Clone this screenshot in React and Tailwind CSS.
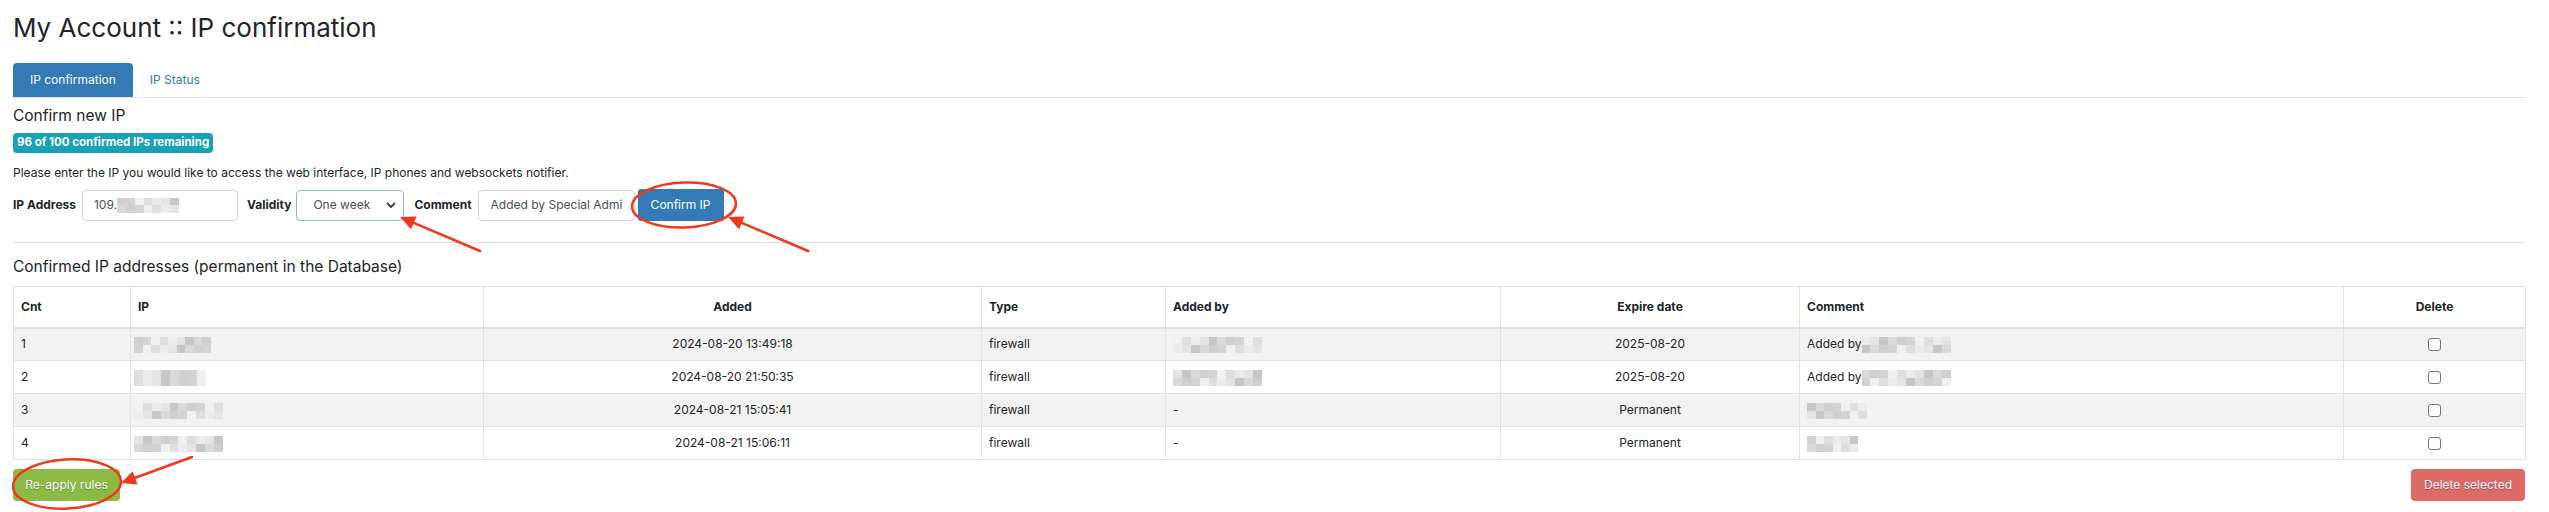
import React from "react";

const shades = ["#d9d9d9", "#cfcfcf", "#e4e4e4", "#c6c6c6", "#dedede", "#ebebeb", "#d3d3d3", "#f0f0f0"];

function Blur({ w, h = 15, seed = 1 }) {
  const cols = Math.max(1, Math.round(w / 9));
  const cells = [];
  let s = seed * 7919 + 131;
  for (let r = 0; r < 2; r++)
    for (let c = 0; c < cols; c++) {
      s = (s * 9301 + 49297) % 233280;
      cells.push(shades[s % shades.length]);
    }
  return (
    <span
      className="inline-grid align-middle"
      style={{ width: w, height: h, gridTemplateColumns: `repeat(${cols}, 1fr)`, gridTemplateRows: "1fr 1fr" }}
    >
      {cells.map((c, i) => (
        <span key={i} style={{ background: c }} />
      ))}
    </span>
  );
}

function Arrow({ x1, y1, x2, y2 }) {
  const dx = x2 - x1;
  const dy = y2 - y1;
  const L = Math.hypot(dx, dy);
  const ux = dx / L;
  const uy = dy / L;
  const hl = 15;
  const hw = 7;
  const bx = x2 - ux * hl;
  const by = y2 - uy * hl;
  const p = `${x2},${y2} ${bx - uy * hw},${by + ux * hw} ${bx + uy * hw},${by - ux * hw}`;
  return (
    <g>
      <line x1={x1} y1={y1} x2={bx + ux * 2} y2={by + uy * 2} stroke="#f2381b" strokeWidth="2.6" strokeLinecap="round" />
      <polygon points={p} fill="#f2381b" />
    </g>
  );
}

function Checkbox() {
  return <span className="inline-block w-[13px] h-[13px] border border-[#767676] rounded-[3px] bg-white align-middle" />;
}

const rows = [
  { cnt: "1", ip: 77, added: "2024-08-20 13:49:18", by: 89, exp: "2025-08-20", comment: { text: "Added by", blur: 89 } },
  { cnt: "2", ip: 72, added: "2024-08-20 21:50:35", by: 89, exp: "2025-08-20", comment: { text: "Added by", blur: 89 } },
  { cnt: "3", ip: 89, added: "2024-08-21 15:05:41", by: null, exp: "Permanent", comment: { text: "", blur: 60 } },
  { cnt: "4", ip: 89, added: "2024-08-21 15:06:11", by: null, exp: "Permanent", comment: { text: "", blur: 51 } },
];

export default function App() {
  return (
    <div className="relative min-h-[512px] bg-white pl-[13px] pr-[24px] pt-[12px] font-['Inter',sans-serif] text-[#333]">
      <h1 className="text-[26px] leading-[32px] font-normal text-[#212529]">My Account :: IP confirmation</h1>

      <div className="mt-[19px] flex border-b border-[#dee2e6]">
        <div className="h-[34px] px-[17px] flex items-center bg-[#337ab7] text-white text-[12px] rounded-t-[4px]">
          IP confirmation
        </div>
        <div className="h-[34px] px-[17px] flex items-center text-[#337ab7] text-[12px]">IP Status</div>
      </div>

      <h2 className="mt-[8px] text-[15.5px] leading-[20px] font-normal text-[#212529]">Confirm new IP</h2>
      <div className="mt-[7px] flex">
        <span className="h-[20px] px-[4px] flex items-center rounded-[4px] bg-[#17a2b8] text-white text-[11.5px] font-bold">
          96 of 100 confirmed IPs remaining
        </span>
      </div>
      <p className="mt-[12px] text-[12px] leading-[16px] text-[#212529]">
        Please enter the IP you would like to access the web interface, IP phones and websockets notifier.
      </p>

      <div className="mt-[8px] flex items-center h-[32px] text-[12px] text-[#212529]">
        <span className="font-bold">IP Address</span>
        <div className="ml-[6px] w-[156px] h-[31px] border border-[#ced4da] rounded-[4px] flex items-center pl-[11px] text-[#495057]">
          109.
          <Blur w={62} seed={3} />
        </div>
        <span className="ml-[9px] font-bold">Validity</span>
        <div className="ml-[5px] w-[108px] h-[31px] border border-[#8fb6df] rounded-[4px] flex items-center justify-between pl-[16px] pr-[7px] text-[#495057]">
          <span>One week</span>
          <svg width="10" height="7" viewBox="0 0 10 7">
            <path d="M1.5 1.5 L5 5 L8.5 1.5" fill="none" stroke="#444" strokeWidth="1.8" strokeLinecap="round" strokeLinejoin="round" />
          </svg>
        </div>
        <span className="ml-[10px] font-bold">Comment</span>
        <div className="ml-[6px] w-[157px] h-[31px] border border-[#ced4da] rounded-[4px] flex items-center pl-[12px] overflow-hidden whitespace-nowrap text-[#495057]">
          <span className="block w-[141px] overflow-hidden">Added by Special Admi</span>
        </div>
        <button className="ml-[3px] w-[86px] h-[32px] bg-[#337ab7] text-white rounded-[3px] text-[12px]">Confirm IP</button>
      </div>

      <div className="mt-[21px] border-t border-[#dee2e6]" />

      <h2 className="mt-[14px] text-[15.5px] leading-[20px] font-normal text-[#212529]">
        Confirmed IP addresses (permanent in the Database)
      </h2>

      <table className="mt-[9px] w-full table-fixed border-collapse text-[12px] text-[#212529]">
        <colgroup>
          <col className="w-[117px]" />
          <col className="w-[353px]" />
          <col className="w-[498px]" />
          <col className="w-[184px]" />
          <col className="w-[335px]" />
          <col className="w-[299px]" />
          <col className="w-[544px]" />
          <col className="w-[182px]" />
        </colgroup>
        <thead>
          <tr className="h-[41px]">
            <th className="border border-[#dee2e6] border-b-2 px-[7px] text-left font-bold">Cnt</th>
            <th className="border border-[#dee2e6] border-b-2 px-[7px] text-left font-bold">IP</th>
            <th className="border border-[#dee2e6] border-b-2 px-[7px] text-center font-bold">Added</th>
            <th className="border border-[#dee2e6] border-b-2 px-[7px] text-left font-bold">Type</th>
            <th className="border border-[#dee2e6] border-b-2 px-[7px] text-left font-bold">Added by</th>
            <th className="border border-[#dee2e6] border-b-2 px-[7px] text-center font-bold">Expire date</th>
            <th className="border border-[#dee2e6] border-b-2 px-[7px] text-left font-bold">Comment</th>
            <th className="border border-[#dee2e6] border-b-2 px-[7px] text-center font-bold">Delete</th>
          </tr>
        </thead>
        <tbody>
          {rows.map((r, i) => (
            <tr key={r.cnt} className={i % 2 === 0 ? "h-[33px] bg-[#f2f2f2]" : "h-[33px] bg-white"}>
              <td className="border border-[#dee2e6] px-[7px]">{r.cnt}</td>
              <td className="border border-[#dee2e6] pl-[3px] pr-[7px]">
                <Blur w={r.ip} h={16} seed={i + 11} />
              </td>
              <td className="border border-[#dee2e6] px-[7px] text-center">{r.added}</td>
              <td className="border border-[#dee2e6] px-[7px]">firewall</td>
              <td className="border border-[#dee2e6] px-[7px]">
                {r.by ? <Blur w={r.by} h={16} seed={i + 21} /> : "-"}
              </td>
              <td className="border border-[#dee2e6] px-[7px] text-center">{r.exp}</td>
              <td className="border border-[#dee2e6] px-[7px] whitespace-nowrap">
                {r.comment.text}
                <Blur w={r.comment.blur} h={16} seed={i + 31} />
              </td>
              <td className="border border-[#dee2e6] px-[7px] text-center">
                <Checkbox />
              </td>
            </tr>
          ))}
        </tbody>
      </table>

      <div className="mt-[9px] flex justify-between">
        <button className="w-[107px] h-[32px] rounded-[4px] bg-[#8cba45] text-white text-[12px] [text-shadow:0_1px_1px_rgba(0,0,0,0.3)]">
          Re-apply rules
        </button>
        <button className="w-[114px] h-[32px] rounded-[4px] bg-[#e06a67] text-white text-[12px] [text-shadow:0_1px_1px_rgba(0,0,0,0.3)]">
          Delete selected
        </button>
      </div>

      <svg className="absolute left-0 top-0 pointer-events-none" width="2549" height="512" viewBox="0 0 2549 512">
        <ellipse cx="684" cy="205" rx="52" ry="22.5" fill="none" stroke="#f2381b" strokeWidth="2.5" transform="rotate(-2 684 205)" />
        <ellipse cx="67" cy="484" rx="54" ry="24.5" fill="none" stroke="#f2381b" strokeWidth="2.5" transform="rotate(-3 67 484)" />
        <Arrow x1={480} y1={251} x2={400} y2={217} />
        <Arrow x1={808} y1={251} x2={728} y2={217} />
        <Arrow x1={192} y1={457} x2={121} y2={483} />
      </svg>
    </div>
  );
}
